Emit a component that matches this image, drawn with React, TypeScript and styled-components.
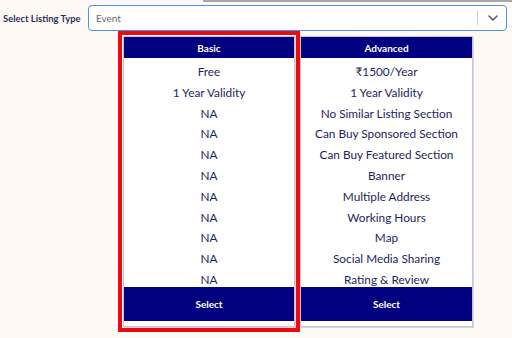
import React from "react";
import styled, { createGlobalStyle } from "styled-components";

const GlobalStyle = createGlobalStyle`
  html, body { margin: 0; padding: 0; background: #fef9f5; }
  body { font-family: "Lato", "Liberation Sans", sans-serif; }
`;

const Page = styled.div`
  position: relative;
  width: 512px;
  height: 338px;
  overflow: hidden;
  background: #fef9f5;
`;

const TopLine = styled.div`
  height: 2px;
  margin-left: 203px;
  background: #a8a8a8;
`;

const FieldRow = styled.div`
  display: flex;
  align-items: center;
  padding: 3px 5px 0 3px;
  gap: 5px;
`;

const Label = styled.label`
  width: 80px;
  font-size: 9.4px;
  font-weight: 700;
  color: #2d3060;
  white-space: nowrap;
`;

const SelectBox = styled.div`
  flex: 1;
  height: 26px;
  box-sizing: border-box;
  border: 1px solid #4f8ff0;
  border-radius: 4px;
  background: #ffffff;
  display: flex;
  align-items: center;
  padding-left: 7px;
`;

const SelectValue = styled.span`
  flex: 1;
  font-size: 10px;
  color: #6a6a6a;
`;

const Divider = styled.span`
  width: 1px;
  height: 14px;
  background: #cccccc;
`;

const Arrow = styled.span`
  width: 28px;
  padding-left: 2px;
  box-sizing: border-box;
  display: flex;
  align-items: center;
  justify-content: center;
`;

const Plans = styled.div`
  display: flex;
  padding-left: 118px;
`;

const PlanFrame = styled.div<{ $selected?: boolean }>`
  border: ${(p) => (p.$selected ? "4px solid #ec0b10" : "0")};
  padding: ${(p) => (p.$selected ? "1px" : "5px 0")};
  align-self: flex-start;
`;

const Card = styled.div<{ $width: number }>`
  width: ${(p) => p.$width}px;
  box-sizing: border-box;
  border: 1px solid #c6c6d6;
  box-shadow: 1px 1px 0 #d4d4e0;
  background: #ffffff;
  display: flex;
  flex-direction: column;
  padding-bottom: 5px;
`;

const CardHeader = styled.div`
  height: 21px;
  background: #000080;
  color: #ffffff;
  font-size: 10px;
  font-weight: 700;
  display: flex;
  align-items: center;
  justify-content: center;
`;

const Features = styled.ul`
  list-style: none;
  margin: 0;
  padding: 7px 0 0;
  display: flex;
  flex-direction: column;
  gap: 6.8px;
`;

const Feature = styled.li`
  height: 14px;
  line-height: 14px;
  font-size: 11.8px;
  color: #1e1e62;
  text-align: center;
  white-space: nowrap;
`;

const SelectButton = styled.button`
  height: 34px;
  border: 0;
  background: #000080;
  color: #ffffff;
  font-family: inherit;
  font-size: 10px;
  font-weight: 700;
  cursor: pointer;
`;

const plans = [
  {
    name: "Basic",
    selected: true,
    width: 172,
    features: ["Free", "1 Year Validity", "NA", "NA", "NA", "NA", "NA", "NA", "NA", "NA", "NA"],
  },
  {
    name: "Advanced",
    selected: false,
    width: 173,
    features: [
      "₹1500/Year",
      "1 Year Validity",
      "No Similar Listing Section",
      "Can Buy Sponsored Section",
      "Can Buy Featured Section",
      "Banner",
      "Multiple Address",
      "Working Hours",
      "Map",
      "Social Media Sharing",
      "Rating & Review",
    ],
  },
];

export default function App() {
  return (
    <Page>
      <GlobalStyle />
      <TopLine />
      <FieldRow>
        <Label>Select Listing Type</Label>
        <SelectBox>
          <SelectValue>Event</SelectValue>
          <Divider />
          <Arrow>
            <svg width="10" height="6" viewBox="0 0 10 6" fill="none">
              <path d="M1 1l4 4 4-4" stroke="#555" strokeWidth="1.5" strokeLinecap="round" strokeLinejoin="round" />
            </svg>
          </Arrow>
        </SelectBox>
      </FieldRow>
      <Plans>
        {plans.map((plan) => (
          <PlanFrame key={plan.name} $selected={plan.selected}>
            <Card $width={plan.width}>
              <CardHeader>{plan.name}</CardHeader>
              <Features>
                {plan.features.map((f, i) => (
                  <Feature key={i}>{f}</Feature>
                ))}
              </Features>
              <SelectButton>Select</SelectButton>
            </Card>
          </PlanFrame>
        ))}
      </Plans>
    </Page>
  );
}
